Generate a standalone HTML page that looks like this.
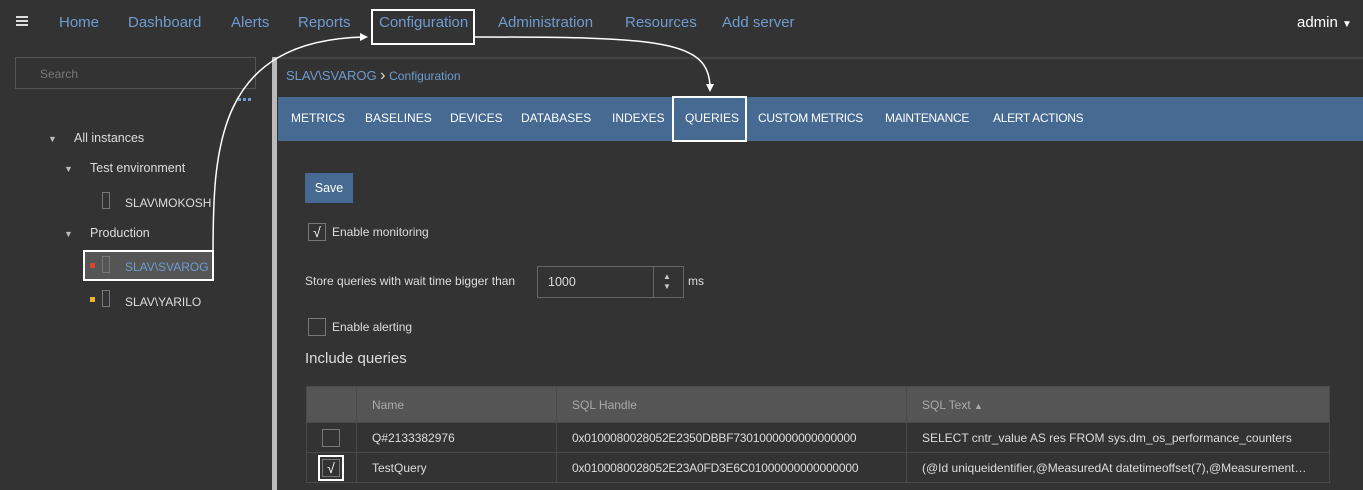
<!DOCTYPE html>
<html><head><meta charset="utf-8"><style>
*{margin:0;padding:0;box-sizing:border-box}
body{width:1363px;height:490px;background:#333;font-family:"Liberation Sans",sans-serif;color:#ddd;position:relative;overflow:hidden;font-size:12px}
.a{position:absolute;white-space:nowrap}
.nav{color:#6f9bd0;font-size:15px;top:14px}
.tab{color:#fff;font-size:12px;top:111px}
.cb{position:absolute;width:18px;height:18px;border:1px solid #777}
td,th{border:1px solid #4a4a4a;padding:0 15px;text-align:left;font-weight:normal;height:30px;font-size:12px}
th{background:#555;color:#aaa;height:36px}
td{color:#ddd}
</style></head><body>
<div class="a" style="left:16px;top:16px;width:12px;height:2px;background:#ddd;box-shadow:0 4px 0 #ddd,0 8px 0 #ddd"></div>
<div class="a nav" style="left:59px">Home</div>
<div class="a nav" style="left:128px">Dashboard</div>
<div class="a nav" style="left:231px">Alerts</div>
<div class="a nav" style="left:298px">Reports</div>
<div class="a nav" style="left:379px">Configuration</div>
<div class="a" style="left:371px;top:9px;width:104px;height:36px;border:2px solid #fff"></div>
<div class="a nav" style="left:498px">Administration</div>
<div class="a nav" style="left:625px">Resources</div>
<div class="a nav" style="left:722px">Add server</div>
<div class="a" style="left:1297px;top:14px;font-size:15px;color:#fff">admin <span style="font-size:10px">▼</span></div>

<div class="a" style="left:15px;top:57px;width:241px;height:32px;border:1px solid #555"></div>
<div class="a" style="left:40px;top:67px;color:#777">Search</div>
<div class="a" style="left:238px;top:98px;width:13px;height:3px;border-top:3px dotted #6f9bd0"></div>
<div class="a" style="left:48px;top:134px;font-size:9px;color:#bbb">▼</div><div class="a" style="left:74px;top:131px;font-size:12.5px">All instances</div>
<div class="a" style="left:64px;top:164px;font-size:9px;color:#bbb">▼</div><div class="a" style="left:90px;top:161px;font-size:12.5px">Test environment</div>
<div class="a" style="left:102px;top:192px;width:8px;height:17px;border:1px solid #777"></div><div class="a" style="left:125px;top:196px;font-size:12px">SLAV\MOKOSH</div>
<div class="a" style="left:64px;top:229px;font-size:9px;color:#bbb">▼</div><div class="a" style="left:90px;top:226px;font-size:12.5px">Production</div>
<div class="a" style="left:83px;top:250px;width:131px;height:31px;background:#555;border:2px solid #fff"></div>
<div class="a" style="left:90px;top:263px;width:5px;height:5px;background:#e04030"></div>
<div class="a" style="left:102px;top:256px;width:8px;height:17px;border:1px solid #777"></div><div class="a" style="left:125px;top:260px;font-size:12px;color:#6f9bd0">SLAV\SVAROG</div>
<div class="a" style="left:90px;top:297px;width:5px;height:5px;background:#f0b030"></div>
<div class="a" style="left:102px;top:290px;width:8px;height:17px;border:1px solid #777"></div><div class="a" style="left:125px;top:295px;font-size:12px">SLAV\YARILO</div>

<div class="a" style="left:272px;top:57px;width:5px;height:433px;background:#bbb"></div>
<div class="a" style="left:278px;top:57px;width:1085px;height:2px;background:#444"></div>
<div class="a" style="left:286px;top:67px;font-size:13px;color:#6f9bd0">SLAV\SVAROG <span style="color:#ddd;font-size:16px">›</span> <span style="font-size:12px">Configuration</span></div>
<div class="a" style="left:278px;top:97px;width:1085px;height:44px;background:#466a92"></div>
<div class="a tab" style="left:291px">METRICS</div>
<div class="a tab" style="left:365px">BASELINES</div>
<div class="a tab" style="left:450px">DEVICES</div>
<div class="a tab" style="left:521px">DATABASES</div>
<div class="a tab" style="left:612px">INDEXES</div>
<div class="a tab" style="left:685px">QUERIES</div>
<div class="a" style="left:672px;top:96px;width:75px;height:46px;border:2px solid #fff"></div>
<div class="a tab" style="left:758px;letter-spacing:-0.3px">CUSTOM METRICS</div>
<div class="a tab" style="left:885px;letter-spacing:-0.3px">MAINTENANCE</div>
<div class="a tab" style="left:993px;letter-spacing:-0.3px">ALERT ACTIONS</div>

<svg class="a" style="left:0;top:0" width="1363" height="490"><path d="M213 258 C213 150 215 40 365 37" fill="none" stroke="#fff" stroke-width="1.5"/><path d="M360 33 L368 37 L360 41Z" fill="#fff"/><path d="M475 37 C660 37 710 40 710 88" fill="none" stroke="#fff" stroke-width="1.5"/><path d="M706 84 L710 92 L714 84Z" fill="#fff"/></svg>

<div class="a" style="left:305px;top:173px;width:48px;height:30px;background:#466a92;color:#fff;font-size:12.5px;text-align:center;line-height:30px">Save</div>
<div class="cb" style="left:308px;top:223px;color:#fff;font-size:14px;line-height:16px;text-align:center">√</div>
<div class="a" style="left:332px;top:225px;font-size:12px">Enable monitoring</div>
<div class="a" style="left:305px;top:274px;font-size:12px">Store queries with wait time bigger than</div>
<div class="a" style="left:537px;top:266px;width:147px;height:32px;border:1px solid #666"></div>
<div class="a" style="left:653px;top:266px;width:1px;height:32px;background:#666"></div>
<div class="a" style="left:663px;top:272px;font-size:8px;line-height:10px;color:#ccc">▲<br>▼</div>
<div class="a" style="left:548px;top:275px;font-size:12.5px">1000</div>
<div class="a" style="left:688px;top:274px;font-size:12px">ms</div>
<div class="cb" style="left:308px;top:318px"></div>
<div class="a" style="left:332px;top:320px;font-size:12px">Enable alerting</div>
<div class="a" style="left:305px;top:350px;font-size:15px">Include queries</div>

<table class="a" style="left:306px;top:386px;width:1024px;border-collapse:collapse">
<tr><th style="width:50px"></th><th style="width:200px">Name</th><th style="width:350px">SQL Handle</th><th>SQL Text <span style="font-size:9px">▲</span></th></tr>
<tr><td></td><td>Q#2133382976</td><td style="letter-spacing:-0.2px">0x0100080028052E2350DBBF7301000000000000000</td><td>SELECT cntr_value AS res FROM sys.dm_os_performance_counters</td></tr>
<tr><td></td><td>TestQuery</td><td style="letter-spacing:-0.2px">0x0100080028052E23A0FD3E6C01000000000000000</td><td>(@Id uniqueidentifier,@MeasuredAt datetimeoffset(7),@Measurement…</td></tr>
</table>
<div class="cb" style="left:322px;top:429px"></div>
<div class="a" style="left:318px;top:455px;width:26px;height:26px;border:2px solid #fff"></div>
<div class="cb" style="left:322px;top:459px;color:#fff;font-size:14px;line-height:16px;text-align:center">√</div>
</body></html>
